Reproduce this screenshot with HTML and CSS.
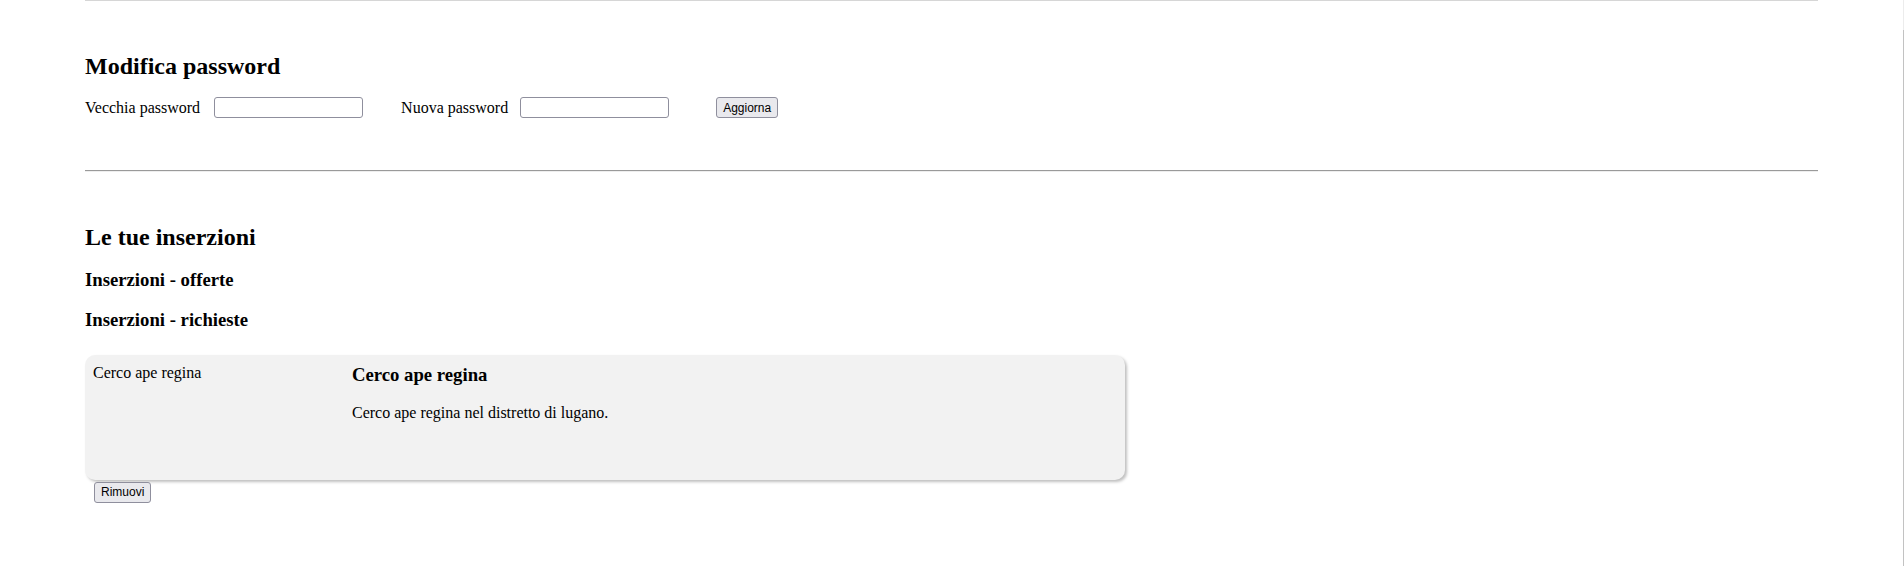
FILE: index.html
```html
<!DOCTYPE html>
<html lang="it">
<head>
<meta charset="utf-8">
<title>Profilo</title>
<link rel="stylesheet" href="styles.css">
</head>
<body>
<div class="scroll-edge"></div>
<main class="page">
  <div class="topline"></div>
  <section class="pw">
    <h2 class="title">Modifica password</h2>
    <form class="pw-form">
      <label class="lbl lbl-old" for="old">Vecchia password</label>
      <input class="field field-old" id="old" type="password">
      <label class="lbl lbl-new" for="new">Nuova password</label>
      <input class="field field-new" id="new" type="password">
      <button class="btn" type="button">Aggiorna</button>
    </form>
  </section>
  <hr class="sep">
  <section class="ads">
    <h2 class="title title-ads">Le tue inserzioni</h2>
    <h3 class="sub sub-first">Inserzioni - offerte</h3>
    <h3 class="sub sub-second">Inserzioni - richieste</h3>
    <div class="card">
      <div class="card-side">Cerco ape regina</div>
      <div class="card-body">
        <h3 class="card-title">Cerco ape regina</h3>
        <p class="card-text">Cerco ape regina nel distretto di lugano.</p>
      </div>
    </div>
    <button class="btn btn-remove" type="button">Rimuovi</button>
  </section>
</main>
</body>
</html>
```

FILE: styles.css
```css
html, body {
  margin: 0;
  padding: 0;
  background: #fff;
}

body {
  font-family: "Liberation Serif", "Times New Roman", serif;
  font-size: 16px;
  color: #000;
}

.scroll-edge {
  position: fixed;
  top: 0;
  right: 0;
  bottom: 0;
  width: 1px;
  background: linear-gradient(#ececec 0 30px, #c2c2c2 30px);
}

.page {
  padding: 0 86px 0 85px;
}

.topline {
  height: 1px;
  background: #d6d6d6;
}

.title {
  font-size: 24px;
  font-weight: bold;
  margin: 52px 0 17px;
}

.pw-form {
  display: flex;
  align-items: center;
  margin: 0;
}

.field {
  box-sizing: border-box;
  width: 149px;
  height: 21px;
  margin: 0;
  padding: 1px 3px;
  border: 1px solid #8f8f9d;
  border-radius: 3px;
  background: #fff;
  font-family: "Liberation Sans", Arial, sans-serif;
  font-size: 13.33px;
}

.btn {
  box-sizing: border-box;
  font-family: "Liberation Sans", Arial, sans-serif;
  font-size: 12px;
  color: #000;
  height: 21px;
  padding: 0 6px;
  margin: 0;
  border: 1px solid #8f8f9d;
  border-radius: 3px;
  background: #e9e9ed;
}

.lbl-old { margin-right: 14px; }
.field-old { margin-right: 38px; }
.lbl-new { margin-right: 12px; }
.field-new { margin-right: 47px; }

.sep {
  margin: 51.5px 0 0;
  border: 0;
  border-top: 1px solid #9a9a9a;
  border-bottom: 1px solid #eeeeee;
  height: 0;
}

.title-ads {
  margin: 52px 0 0;
}

.sub {
  font-size: 18.72px;
  font-weight: bold;
  margin: 0;
}

.sub-first { margin-top: 18.5px; }
.sub-second { margin-top: 17.5px; }

.card {
  box-sizing: border-box;
  width: 60%;
  height: 125px;
  margin-top: 24.3px;
  padding: 9px 8px;
  background: #f2f2f2;
  border-radius: 10px;
  box-shadow: 2px 2px 3px rgba(0, 0, 0, 0.25);
  display: grid;
  grid-template-columns: 259px 1fr;
}

.card-title {
  font-size: 18.72px;
  font-weight: bold;
  margin: 0;
}

.card-text {
  margin: 18px 0 0;
}

.btn-remove {
  display: block;
  margin: 2px 0 0 9px;
}
```
